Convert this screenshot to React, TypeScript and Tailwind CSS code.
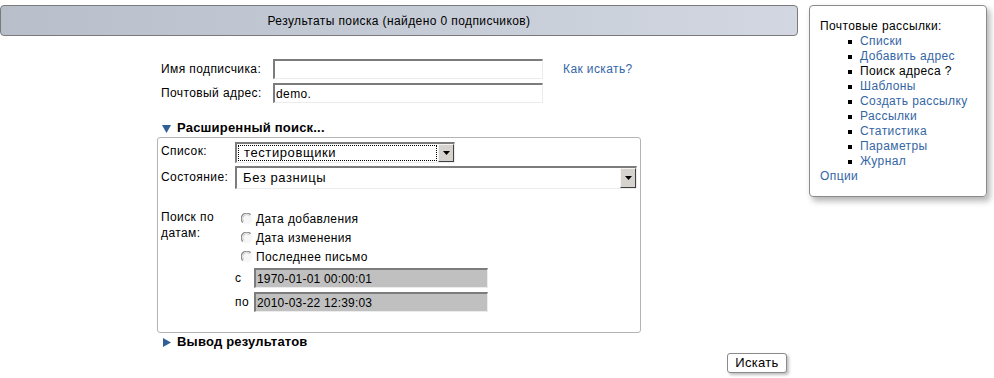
import React from "react";

const links = [
  { label: "Списки", active: false },
  { label: "Добавить адрес", active: false },
  { label: "Поиск адреса ?", active: true },
  { label: "Шаблоны", active: false },
  { label: "Создать рассылку", active: false },
  { label: "Рассылки", active: false },
  { label: "Статистика", active: false },
  { label: "Параметры", active: false },
  { label: "Журнал", active: false },
];

const radios = ["Дата добавления", "Дата изменения", "Последнее письмо"];

function Arrow({ down }: { down?: boolean }) {
  return (
    <svg width="9" height="9" viewBox="0 0 9 9" className="shrink-0">
      {down ? <path d="M0 1h9L4.5 9z" fill="#2f5f96" /> : <path d="M1 0v9l8-4.5z" fill="#2f5f96" />}
    </svg>
  );
}

function DropButton() {
  return (
    <div className="w-[16px] h-full shrink-0 bg-[#d6d3ce] border-t border-l border-t-[#f4f4f4] border-l-[#f4f4f4] border-r border-b border-r-[#404040] border-b-[#404040] flex items-center justify-center">
      <svg width="7" height="4" viewBox="0 0 7 4">
        <path d="M0 0h7L3.5 4z" fill="#000" />
      </svg>
    </div>
  );
}

function Radio({ label }: { label: string }) {
  return (
    <div className="h-[19px] flex items-center pl-[6px]">
      <svg width="12" height="12" viewBox="0 0 12 12" className="shrink-0">
        <circle cx="6" cy="6" r="5.5" fill="#f7f7f7" />
        <path d="M1.8 9.6A5 5 0 0 1 9.6 1.8" stroke="#8a8a8a" strokeWidth="1.3" fill="none" />
        <path d="M2.9 8.4A3.5 3.5 0 0 1 8.4 2.9" stroke="#d0d0d0" strokeWidth="1" fill="none" />
      </svg>
      <span className="ml-[3px] text-[12px]">{label}</span>
    </div>
  );
}

const inputBorder =
  "border-t-2 border-l-2 border-t-[#7c7c7c] border-l-[#7c7c7c] border-r border-b border-r-[#ececec] border-b-[#ececec]";

export default function App() {
  return (
    <div className="w-[994px] h-[378px] bg-white flex text-[12px] tracking-[0.4px] text-black font-['Liberation_Sans',Arial,sans-serif]">
      <div className="w-[798px] shrink-0 flex flex-col">
        <div className="mt-[5px] h-[31px] rounded-[4px] border border-[#7a7a7a] bg-gradient-to-r from-[#b8bfca] to-[#d2d7e1] flex items-center justify-center">
          Результаты поиска (найдено 0 подписчиков)
        </div>

        <div className="w-[484px] mx-auto">
          <div className="mt-[23px] pl-[4px] flex flex-col gap-[4px]">
            <div className="flex h-[20px]">
              <div className="w-[112px] pt-[1px]">Имя подписчика:</div>
              <input readOnly className={`w-[270px] h-[20px] bg-white outline-none px-[2px] ${inputBorder}`} />
              <a className="ml-[20px] pt-[1px] text-[#3466a4]">Как искать?</a>
            </div>
            <div className="flex h-[20px]">
              <div className="w-[112px] pt-[1px]">Почтовый адрес:</div>
              <input
                readOnly
                value="demo."
                className={`w-[270px] h-[20px] bg-white outline-none px-[1px] text-[12px] tracking-[0.4px] ${inputBorder}`}
              />
            </div>
          </div>

          <div className="mt-[17px] h-[16px] pl-[5px] flex items-center gap-[6px] font-bold text-[13px] tracking-[0.2px]">
            <Arrow down />
            <span>Расширенный поиск...</span>
          </div>

          <div className="mt-[1px] h-[196px] border border-[#b4b4b4] rounded-[3px] pl-[3px] pt-[4px] pr-[3px]">
            <div className="flex h-[21px]">
              <div className="w-[74px]">Список:</div>
              <div className={`w-[220px] h-[21px] bg-white flex ${inputBorder}`}>
                <div className="flex-1 m-[1px] border border-dotted border-black flex items-center pl-[5px] text-[13px] tracking-[0.6px]">
                  тестировщики
                </div>
                <DropButton />
              </div>
            </div>
            <div className="flex h-[23px] mt-[3px]">
              <div className="w-[74px] pt-[2px]">Состояние:</div>
              <div className={`w-[402px] h-[23px] bg-white flex ${inputBorder}`}>
                <div className="flex-1 flex items-center pl-[6px] text-[13px] tracking-[0.6px]">Без разницы</div>
                <DropButton />
              </div>
            </div>

            <div className="flex mt-[20px]">
              <div className="w-[74px] leading-[16px]">Поиск по датам:</div>
              <div className="flex flex-col">
                {radios.map((r) => (
                  <Radio key={r} label={r} />
                ))}
                <div className="flex items-end h-[20px] mt-[2px]">
                  <span className="w-[19px] pb-[1px]">с</span>
                  <div className={`w-[234px] h-[20px] bg-[#c0c0c0] flex items-center pl-[1px] tracking-[0.2px] ${inputBorder}`}>
                    1970-01-01 00:00:01
                  </div>
                </div>
                <div className="flex items-end h-[20px] mt-[4px]">
                  <span className="w-[19px] pb-[1px]">по</span>
                  <div className={`w-[234px] h-[20px] bg-[#c0c0c0] flex items-center pl-[1px] tracking-[0.2px] ${inputBorder}`}>
                    2010-03-22 12:39:03
                  </div>
                </div>
              </div>
            </div>
          </div>

          <div className="mt-[1px] h-[16px] pl-[5px] flex items-center gap-[6px] font-bold text-[13px] tracking-[0.2px]">
            <Arrow />
            <span>Вывод результатов</span>
          </div>
        </div>

        <div className="flex justify-end pr-[11px] mt-[3px]">
          <button className="w-[60px] h-[20px] rounded-[3px] border border-[#8a8a8a] bg-white text-[13px] tracking-[0.3px] shadow-[2px_2px_3px_rgba(0,0,0,0.25)] flex items-center justify-center">
            Искать
          </button>
        </div>
      </div>

      <div className="ml-[11px] mt-[5px] w-[178px] h-[192px] border border-[#8a8a8a] rounded-[4px] shadow-[3px_4px_6px_rgba(0,0,0,0.3)] pl-[10px] pt-[13px] leading-[15px] text-[12px]">
        <div>Почтовые рассылки:</div>
        <ul>
          {links.map((l) => (
            <li key={l.label} className="flex items-center">
              <span className="ml-[28px] mr-[8px] w-[4px] h-[4px] bg-black" />
              <span className={l.active ? "text-black" : "text-[#3466a4]"}>{l.label}</span>
            </li>
          ))}
        </ul>
        <div className="text-[#3466a4]">Опции</div>
      </div>
    </div>
  );
}
